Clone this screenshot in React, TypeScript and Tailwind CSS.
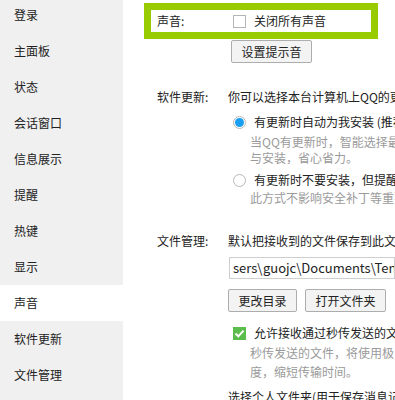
import React from "react";

const navItems = [
  "登录",
  "主面板",
  "状态",
  "会话窗口",
  "信息展示",
  "提醒",
  "热键",
  "显示",
  "声音",
  "软件更新",
  "文件管理",
];

function Checkbox({ checked }: { checked?: boolean }) {
  if (checked) {
    return (
      <span className="flex h-[13px] w-[13px] shrink-0 items-center justify-center bg-[#5bbd4b]">
        <svg width="11" height="11" viewBox="0 0 11 11">
          <path d="M1.5 5.5 L4.3 8.3 L9.5 2.6" fill="none" stroke="#fff" strokeWidth="2" />
        </svg>
      </span>
    );
  }
  return <span className="h-[13px] w-[13px] shrink-0 border border-[#b5b5b5] bg-white" />;
}

function Radio({ checked }: { checked?: boolean }) {
  return (
    <span className="flex h-[13px] w-[13px] shrink-0 items-center justify-center rounded-full border border-[#b8b8b8] bg-white">
      {checked && <span className="h-[9px] w-[9px] rounded-full bg-[#1a9ef2]" />}
    </span>
  );
}

function Btn({ children, className = "" }: { children: React.ReactNode; className?: string }) {
  return (
    <div
      className={`flex h-[23px] shrink-0 items-center justify-center rounded-[2px] border border-[#adadad] bg-[#f3f3f3] text-[#222] ${className}`}
    >
      {children}
    </div>
  );
}

export default function App() {
  return (
    <div
      className="flex h-[400px] w-[395px] overflow-hidden whitespace-nowrap bg-white text-[12px] text-[#222]"
      style={{ fontFamily: '"Noto Sans CJK SC", "Liberation Sans", sans-serif' }}
    >
      <aside className="w-[123px] shrink-0 bg-[#f0f0f0]">
        <ul className="-mt-[3px]">
          {navItems.map((item) => (
            <li
              key={item}
              className={`flex h-[36px] items-center pl-[14px] ${item === "声音" ? "bg-white" : ""}`}
            >
              {item}
            </li>
          ))}
        </ul>
      </aside>

      <main className="flex min-w-0 flex-1 flex-col overflow-hidden pl-[21px]">
        <div className="mt-[3px] flex h-[36px] w-[234px] shrink-0 items-center border-[7px] border-[#99cc00] pl-[6px]">
          <span className="w-[76px] shrink-0">声音:</span>
          <Checkbox />
          <span className="ml-[8px]">关闭所有声音</span>
        </div>

        <Btn className="ml-[87px] mt-[1px] w-[81px]">设置提示音</Btn>

        <div className="mt-[24px] flex h-[20px] shrink-0 items-center pl-[13px]">
          <span className="w-[71px] shrink-0">软件更新:</span>
          <span>你可以选择本台计算机上QQ的更</span>
        </div>
        <div className="mt-[5px] flex h-[20px] shrink-0 items-center pl-[89px]">
          <Radio checked />
          <span className="ml-[8px]">有更新时自动为我安装 (推荐)</span>
        </div>
        <div className="mt-[2px] shrink-0 pl-[106px] leading-[16px] text-[#9a9a9a]">
          <div>当QQ有更新时，智能选择最佳</div>
          <div>与安装，省心省力。</div>
        </div>
        <div className="mt-[4px] flex h-[20px] shrink-0 items-center pl-[89px]">
          <Radio />
          <span className="ml-[8px]">有更新时不要安装，但提醒</span>
        </div>
        <div className="shrink-0 pl-[106px] leading-[16px] text-[#9a9a9a]">
          此方式不影响安全补丁等重要
        </div>

        <div className="mt-[25px] flex h-[20px] shrink-0 items-center pl-[13px]">
          <span className="w-[71px] shrink-0">文件管理:</span>
          <span>默认把接收到的文件保存到此文</span>
        </div>
        <div className="ml-[85px] mt-[6px] flex h-[22px] shrink-0 items-center overflow-hidden border border-[#cfcfcf] pl-[3px] text-[13px]">
          sers\guojc\Documents\Tencent
        </div>
        <div className="ml-[84px] mt-[10px] flex shrink-0 gap-[8px]">
          <Btn className="w-[69px]">更改目录</Btn>
          <Btn className="w-[81px]">打开文件夹</Btn>
        </div>
        <div className="mt-[11px] flex h-[20px] shrink-0 items-center pl-[89px]">
          <Checkbox checked />
          <span className="ml-[8px]">允许接收通过秒传发送的文</span>
        </div>
        <div className="mt-[2px] shrink-0 pl-[106px] leading-[16px] text-[#9a9a9a]">
          <div>秒传发送的文件，将使用极</div>
          <div className="mt-[3px]">度，缩短传输时间。</div>
        </div>
        <div className="mt-[7px] flex h-[20px] shrink-0 items-center pl-[84px]">
          选择个人文件夹(用于保存消息记
        </div>
      </main>
    </div>
  );
}
